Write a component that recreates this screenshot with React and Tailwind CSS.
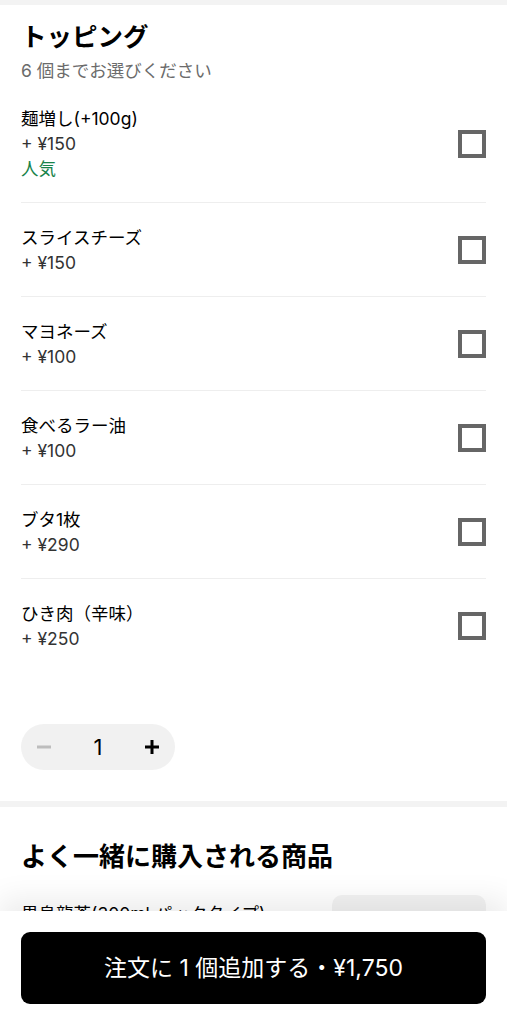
import React from "react";

const items = [
  { name: "麺増し(+100g)", price: "+ ¥150", popular: true },
  { name: "スライスチーズ", price: "+ ¥150" },
  { name: "マヨネーズ", price: "+ ¥100" },
  { name: "食べるラー油", price: "+ ¥100" },
  { name: "ブタ1枚", price: "+ ¥290" },
  { name: "ひき肉（辛味）", price: "+ ¥250" },
];

function Row({ item, last }) {
  return (
    <div className={last ? "" : "border-b border-[#eeeeee]"}>
      <div className="flex items-center justify-between pt-[22px] pb-[21px]">
        <div className="flex flex-col">
          <div className="text-[17.5px] leading-[25px] text-black">{item.name}</div>
          <div className="text-[17.5px] leading-[25px] text-[#333333]">{item.price}</div>
          {item.popular && (
            <div className="text-[17.5px] leading-[25px] text-[#17834a]">人気</div>
          )}
        </div>
        <div className="w-[28px] h-[28px] border-[4px] border-[#666666] bg-white" />
      </div>
    </div>
  );
}

export default function App() {
  return (
    <div
      className="relative min-h-[1024px] bg-white text-black"
      style={{ fontFamily: 'Inter, "Noto Sans CJK JP", "Noto Sans", sans-serif' }}
    >
      <div className="h-[5px] bg-[#f3f3f3]" />
      <div className="px-[21px] pt-[16px]">
        <h2 className="text-[25.5px] leading-[32px] font-bold">トッピング</h2>
        <div className="mt-[5px] text-[17.5px] leading-[25px] text-[#6b6b6b]">6 個までお選びください</div>
        <div className="mt-[1px]">
          {items.map((it, i) => (
            <Row key={i} item={it} last={i === items.length - 1} />
          ))}
        </div>
        <div className="pt-[52px] pb-[31px]">
          <div className="w-[154px] h-[46px] rounded-full bg-[#f1f1f1] flex items-center justify-between px-[14px]">
            <svg width="18" height="18" viewBox="0 0 18 18">
              <path d="M2 9h14" stroke="#bdbdbd" strokeWidth="3" />
            </svg>
            <span className="text-[22px] leading-none text-black">1</span>
            <svg width="18" height="18" viewBox="0 0 18 18">
              <path d="M2 9h14M9 2v14" stroke="#000" strokeWidth="3" />
            </svg>
          </div>
        </div>
      </div>
      <div className="h-[6px] bg-[#f3f3f3]" />
      <div className="px-[21px] pt-[34px]">
        <h2 className="text-[26px] leading-[32px] font-bold">よく一緒に購入される商品</h2>
        <div className="mt-[22px] flex justify-between">
          <div className="text-[17.5px] leading-[25px] pt-[6px]">黒烏龍茶(300ml パックタイプ)</div>
          <div className="w-[154px] h-[154px] rounded-[10px] bg-[#f3f3f3] shrink-0" />
        </div>
        <div className="h-[200px]" />
      </div>

      <div className="fixed bottom-0 left-0 right-0 bg-white px-[21px] pt-[21px] pb-[20px] shadow-[0_-12px_28px_rgba(0,0,0,0.08)]">
        <button className="w-full h-[72px] rounded-[9px] bg-black text-white text-[23px] flex items-center justify-center">
          注文に 1 個追加する・¥1,750
        </button>
      </div>
    </div>
  );
}
